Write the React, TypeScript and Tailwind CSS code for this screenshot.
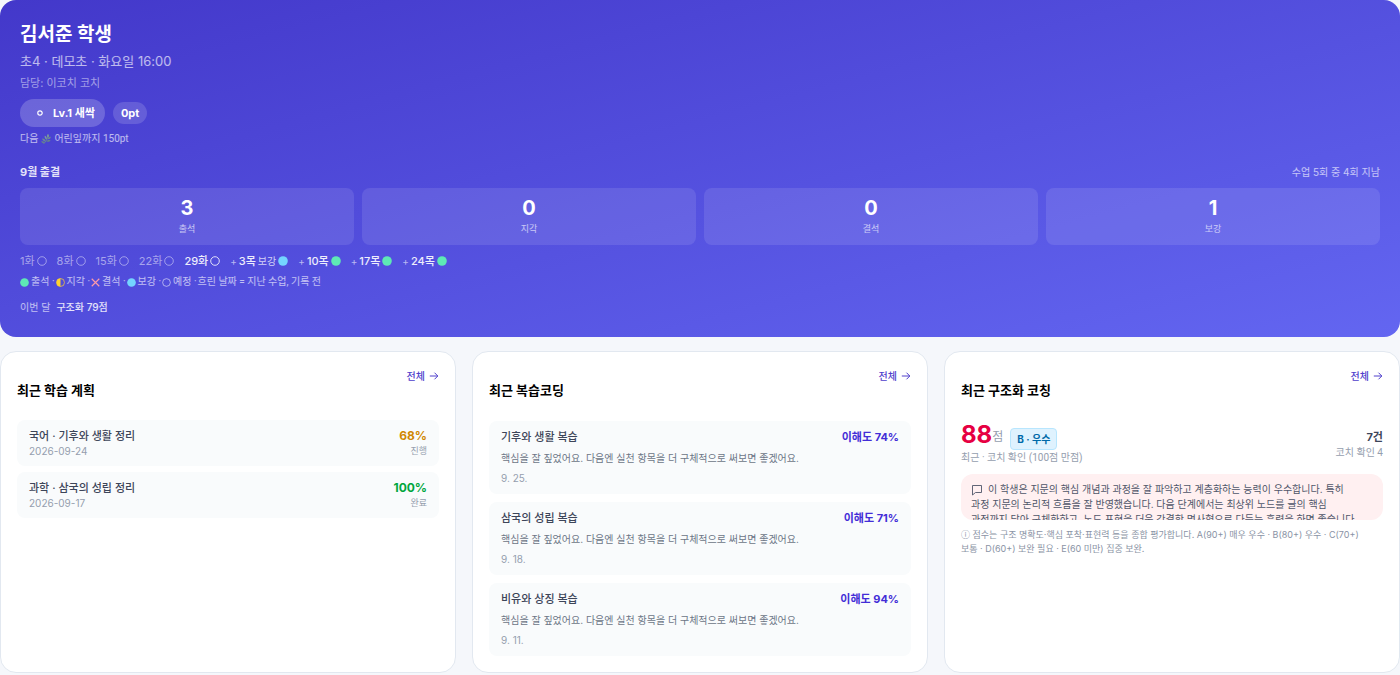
import type { ReactNode } from 'react';

type Mark = 'present' | 'late' | 'absent' | 'makeup' | 'planned';

interface Session {
  label: string;
  mark: Mark;
  extra?: boolean;
  note?: string;
  faded?: boolean;
}

const STATS = [
  { label: '출석', value: 3 },
  { label: '지각', value: 0 },
  { label: '결석', value: 0 },
  { label: '보강', value: 1 },
];

const SESSIONS: Session[] = [
  { label: '1화', mark: 'planned', faded: true },
  { label: '8화', mark: 'planned', faded: true },
  { label: '15화', mark: 'planned', faded: true },
  { label: '22화', mark: 'planned', faded: true },
  { label: '29화', mark: 'planned' },
  { label: '3목', mark: 'makeup', extra: true, note: '보강' },
  { label: '10목', mark: 'present', extra: true },
  { label: '17목', mark: 'present', extra: true },
  { label: '24목', mark: 'present', extra: true },
];

const LEGEND: { mark: Mark; label: string }[] = [
  { mark: 'present', label: '출석' },
  { mark: 'late', label: '지각' },
  { mark: 'absent', label: '결석' },
  { mark: 'makeup', label: '보강' },
  { mark: 'planned', label: '예정' },
];

const PLANS = [
  { title: '국어 · 기후와 생활 정리', date: '2026-09-24', percent: 68, status: '진행' },
  { title: '과학 · 삼국의 성립 정리', date: '2026-09-17', percent: 100, status: '완료' },
];

const REVIEWS = [
  { title: '기후와 생활 복습', score: 74, date: '9. 25.' },
  { title: '삼국의 성립 복습', score: 71, date: '9. 18.' },
  { title: '비유와 상징 복습', score: 94, date: '9. 11.' },
];

const REVIEW_TEXT = '핵심을 잘 짚었어요. 다음엔 실천 항목을 더 구체적으로 써보면 좋겠어요.';

const CAPTION = "font-[Roboto,'Noto_Sans_CJK_KR',sans-serif] text-[10px]";

function MarkIcon({ mark, className }: { mark: Mark; className: string }) {
  return (
    <svg viewBox="0 0 10 10" className={className} fill="none" aria-hidden="true">
      {mark === 'present' && <circle cx="5" cy="5" r="4.8" fill="#5ee9b5" />}
      {mark === 'makeup' && <circle cx="5" cy="5" r="4.8" fill="#74d4ff" />}
      {mark === 'planned' && <circle cx="5" cy="5" r="4.3" stroke="currentColor" strokeWidth="0.9" />}
      {mark === 'late' && (
        <>
          <circle cx="5" cy="5" r="4.4" stroke="#ffd230" strokeWidth="0.8" />
          <path d="M5 0.6a4.4 4.4 0 0 0 0 8.8z" fill="#ffd230" />
        </>
      )}
      {mark === 'absent' && <path d="M0.8 0.8l8.4 8.4M9.200 0.8l-8.400 8.400" stroke="#ff9aa8" strokeWidth="1.3" />}
    </svg>
  );
}

function HerbIcon() {
  return (
    <svg viewBox="0 0 12 12" className="size-[10px]" aria-hidden="true">
      <path d="M3 11.7C5.500 10 7 7 8.500 2.500" stroke="#6c8c92" strokeWidth="1.1" fill="none" />
      <path d="M8.500 4.200C6.700 3 6.800 1.200 8.400 0c1.500 1.300 1.600 3 .1 4.200z" fill="#7d9c9c" />
      <path d="M7.800 6.300c.3-2.200 1.900-3.200 4-3-.2 2.200-1.700 3.300-4 3z" fill="#6c8c92" />
      <path d="M6.600 8.900c1-1.900 2.800-2.300 4.900-1.300-1.200 1.900-3 2.300-4.900 1.300z" fill="#65838c" />
      <path d="M6.800 6.400C4.800 6 4 4.200 4.500 2.100c2 .7 2.900 2.300 2.300 4.300z" fill="#7d9c9c" />
      <path d="M5.500 8.700C3.300 9 1.800 7.600 1.400 5.300c2.300-.1 3.900 1.200 4.100 3.400z" fill="#6c8c92" />
      <path d="M4.400 10.700C2.700 11.500 1.100 10.700.2 9c1.900-.7 3.500 0 4.200 1.700z" fill="#65838c" />
    </svg>
  );
}

function Card({ title, children }: { title: string; children: ReactNode }) {
  return (
    <section className="rounded-2xl border border-[#e2e8f0] bg-white p-4">
      <div className="mb-5 flex items-start justify-between">
        <h2 className="mt-3 text-[13px] leading-5 font-bold text-black">{title}</h2>
        <a href="#" className="flex items-center gap-1 text-[10px] leading-4 font-medium text-[#5040cc]">
          전체
          <svg viewBox="0 0 10 10" className="size-[10px]" fill="none" stroke="currentColor" aria-hidden="true">
            <path d="M0.800 5h8M5.500 1.700L8.800 5L5.500 8.300" />
          </svg>
        </a>
      </div>
      {children}
    </section>
  );
}

function Header() {
  return (
    <header className="rounded-2xl bg-[linear-gradient(165deg,#4338ca,#6366f1)] px-5 py-[21px] text-white">
      <h1 className="text-[19px] leading-7 font-bold">김서준 학생</h1>
      <p className="text-[13px] leading-6 text-white/65">초4 · 데모초 · 화요일 16:00</p>
      <p className="text-[11px] leading-5 text-white/50">담당: 이코치 코치</p>
      <div className="mt-[6px] flex items-center gap-2 text-[11px] leading-4 font-bold">
        <span className="flex items-center rounded-full bg-white/20 py-[6px] pr-[10px] pl-[17px]">
          <svg viewBox="0 0 6 6" className="mr-[10px] size-[6px]" fill="none" stroke="currentColor" aria-hidden="true">
            <circle cx="3" cy="3" r="2.200" strokeWidth="1.200" />
          </svg>
          Lv.1 새싹
        </span>
        <span className="rounded-full bg-white/15 px-2 py-[3px]">0pt</span>
      </div>
      <p className={`${CAPTION} mt-1 flex items-center gap-[3px] leading-4 text-white/65`}>
        다음 <HerbIcon /> 어린잎까지 150pt
      </p>

      <div className="mt-[17px] flex items-center justify-between">
        <h2 className="text-[11px] leading-4 font-bold text-white/85">9월 출결</h2>
        <span className="text-[10px] leading-4 text-white/65">수업 5회 중 4회 지남</span>
      </div>
      <dl className="mt-2 grid grid-cols-4 gap-2">
        {STATS.map((s) => (
          <div key={s.label} className="flex flex-col-reverse rounded-lg bg-white/10 py-2 text-center">
            <dt className="text-[9px] leading-4 text-white/65">{s.label}</dt>
            <dd className="text-[20px] leading-[25px] font-bold">{s.value}</dd>
          </div>
        ))}
      </dl>
      <ul className="mt-2 flex flex-wrap gap-x-[10px] text-[11px] leading-4">
        {SESSIONS.map((s) => (
          <li
            key={s.label}
            className={s.faded ? 'flex items-center gap-[2px] text-white/50' : 'flex items-center gap-[2px] font-medium text-white/90'}
          >
            {s.extra && <span className="text-[10px] font-normal text-white/60">+</span>}
            {s.label}
            {s.note && <span className="text-[10px] font-normal text-white/75">{s.note}</span>}
            <MarkIcon mark={s.mark} className="size-[10px]" />
          </li>
        ))}
      </ul>
      <p className={`${CAPTION} mt-[5px] flex flex-wrap items-center gap-px leading-4 text-white/65`}>
        {LEGEND.map((l) => (
          <span key={l.mark} className="flex items-center gap-[2px]">
            <MarkIcon mark={l.mark} className="size-[9px]" />
            {l.label} ·
          </span>
        ))}
        <span>흐린 날짜 = 지난 수업, 기록 전</span>
      </p>
      <p className="mt-2 flex gap-[6px] text-[10px] leading-[18px] text-white/65">
        이번 달 <span className="font-medium text-white/85">구조화 79점</span>
      </p>
    </header>
  );
}

export default function App() {
  return (
    <div className="min-h-screen bg-[#f5f7fb] font-[Inter,'Noto_Sans_CJK_KR',sans-serif]">
      <Header />
      <main className="mt-[14px] grid grid-cols-3 gap-4">
        <Card title="최근 학습 계획">
          <ul className="flex flex-col gap-[6px]">
            {PLANS.map((p) => (
              <li key={p.title} className="flex justify-between rounded-lg bg-[#f9fbfc] px-3 py-2">
                <div>
                  <p className="text-[11px] leading-4 font-medium text-[#3d4559]">{p.title}</p>
                  <p className="text-[10px] leading-[14px] text-[#959eae]">{p.date}</p>
                </div>
                <div className="text-right">
                  <p
                    className={
                      p.percent === 100
                        ? 'text-[12px] leading-4 font-bold text-[#00a63e]'
                        : 'text-[12px] leading-4 font-bold text-[#d08700]'
                    }
                  >
                    {p.percent}%
                  </p>
                  <p className="text-[9px] leading-[14px] text-[#959eae]">{p.status}</p>
                </div>
              </li>
            ))}
          </ul>
        </Card>

        <Card title="최근 복습코딩">
          <ul className="flex flex-col gap-2 pt-px">
            {REVIEWS.map((r) => (
              <li key={r.title} className="rounded-lg bg-[#f9fbfc] px-3 py-2">
                <div className="flex justify-between leading-[17px]">
                  <span className="text-[11px] font-medium text-[#3d4559]">{r.title}</span>
                  <span className="text-[11px] font-bold text-[#432dd7]">이해도 {r.score}%</span>
                </div>
                <p className="mt-[3px] text-[10px] leading-[18px] text-[#6c7686]">{REVIEW_TEXT}</p>
                <p className="mt-1 text-[10px] leading-[15px] text-[#959eae]">{r.date}</p>
              </li>
            ))}
          </ul>
        </Card>

        <Card title="최근 구조화 코칭">
          <div className="flex items-center justify-between">
            <div>
              <div className="flex items-center">
                <span className="text-[24px] leading-[28px] font-bold text-[#e60042]">88</span>
                <span className="pt-1 text-[12px] leading-5 text-[#959eae]">점</span>
                <span className="mt-2 ml-[7px] rounded-sm border border-[#b8e6fe] bg-[#dff2fe] px-[6px] py-[2px] text-[10px] leading-4 font-bold text-[#0069a8]">
                  B · 우수
                </span>
              </div>
              <p className={`${CAPTION} leading-4 text-[#959eae]`}>최근 · 코치 확인 (100점 만점)</p>
            </div>
            <div className="pt-[3px] text-right">
              <p className="text-[11px] leading-4 font-bold text-[#3d4559]">7건</p>
              <p className={`${CAPTION} leading-4 text-[#959eae]`}>코치 확인 4</p>
            </div>
          </div>
          <div className="mt-2 h-[46px] overflow-hidden rounded-xl bg-[#fff0f1] px-[10px] pt-2 text-[10px] leading-[15px] text-[#4f5669]">
            <p className="flex items-center gap-[5px]">
              <svg viewBox="0 0 12 12" className="size-3" fill="none" stroke="currentColor" strokeWidth="0.900" aria-hidden="true">
                <path d="M1.500 1.500h9v7h-6l-3 2.500z" />
              </svg>
              이 학생은 지문의 핵심 개념과 과정을 잘 파악하고 계층화하는 능력이 우수합니다. 특히
            </p>
            <p>과정 지문의 논리적 흐름을 잘 반영했습니다. 다음 단계에서는 최상위 노드를 글의 핵심</p>
            <p>과정까지 담아 구체화하고, 노드 표현을 더욱 간결한 명사형으로 다듬는 훈련을 하면 좋습니다.</p>
          </div>
          <p className="mt-2 text-[9px] leading-[14px] text-[#8a93a5]">
            ⓘ 점수는 구조 명확도·핵심 포착·표현력 등을 종합 평가합니다. A(90+) 매우 우수 · B(80+) 우수 · C(70+)
            <br />
            보통 · D(60+) 보완 필요 · E(60 미만) 집중 보완.
          </p>
        </Card>
      </main>
    </div>
  );
}
